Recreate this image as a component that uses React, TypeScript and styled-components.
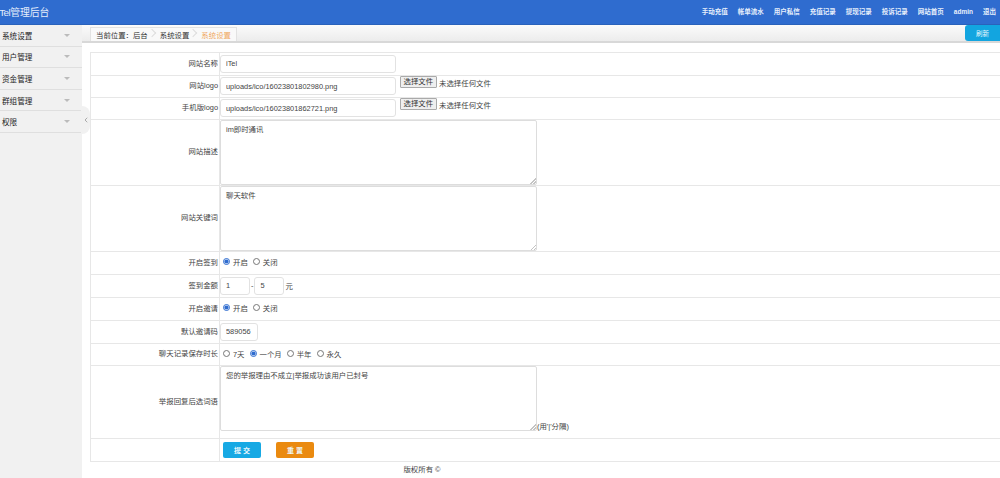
import React from "react";
import styled, { createGlobalStyle } from "styled-components";
import { ChevronLeft } from "lucide-react";

const fontStack = `"Liberation Sans", "Noto Sans CJK SC", sans-serif`;

const GlobalStyle = createGlobalStyle`
  html, body {
    margin: 0;
    padding: 0;
    height: 100%;
    background: #fff;
    overflow: hidden;
  }
  #root {
    height: 100%;
  }
  * {
    box-sizing: border-box;
  }
`;

const navItems = ["手动充值", "帐单流水", "用户私信", "充值记录", "提现记录", "投诉记录", "网站首页", "admin", "退出"];
const sideItems = ["系统设置", "用户管理", "资金管理", "群组管理", "权限"];

export default function App() {
  return (
    <Page>
      <GlobalStyle />
      <Header>
        <Brand><BrandName>iTel</BrandName>管理后台</Brand>
        <TopNav>
          {navItems.map((item) => (
            <TopLink key={item}>{item}</TopLink>
          ))}
        </TopNav>
      </Header>
      <Body>
        <Sidebar>
          {sideItems.map((item) => (
            <SideItem key={item}>
              {item}
              <Caret />
            </SideItem>
          ))}
          <Collapse>
            <ChevronLeft size={8} strokeWidth={3} color="#aaa" />
          </Collapse>
        </Sidebar>
        <Main>
          <CrumbBar>
            <Crumbs>
              <CrumbLabel>当前位置：</CrumbLabel>
              <Crumb>后台</Crumb>
              <Crumb>系统设置</Crumb>
              <Crumb $active>系统设置</Crumb>
            </Crumbs>
            <RefreshButton>刷新</RefreshButton>
          </CrumbBar>
          <Content>
            <FormTable>
              <tbody>
                <Row $height={23}>
                  <LabelCell>网站名称</LabelCell>
                  <FieldCell>
                    <TextInput $width={176} defaultValue="iTel" />
                  </FieldCell>
                </Row>
                <Row $height={22}>
                  <LabelCell>网站logo</LabelCell>
                  <FieldCell>
                    <TextInput $width={176} defaultValue="uploads/ico/16023801802980.png" />
                    <FilePick>
                      <FileButton type="button">选择文件</FileButton>
                      未选择任何文件
                    </FilePick>
                  </FieldCell>
                </Row>
                <Row $height={22}>
                  <LabelCell>手机版logo</LabelCell>
                  <FieldCell>
                    <TextInput $width={176} defaultValue="uploads/ico/16023801862721.png" />
                    <FilePick>
                      <FileButton type="button">选择文件</FileButton>
                      未选择任何文件
                    </FilePick>
                  </FieldCell>
                </Row>
                <Row $height={66}>
                  <LabelCell>网站描述</LabelCell>
                  <AreaCell>
                    <TextArea defaultValue="im即时通讯" />
                  </AreaCell>
                </Row>
                <Row $height={66}>
                  <LabelCell>网站关键词</LabelCell>
                  <AreaCell>
                    <TextArea defaultValue="聊天软件" />
                  </AreaCell>
                </Row>
                <Row $height={23}>
                  <LabelCell>开启签到</LabelCell>
                  <FieldCell>
                    <RadioGroup>
                      <RadioLabel><Radio name="sign" defaultChecked />开启</RadioLabel>
                      <RadioLabel><Radio name="sign" />关闭</RadioLabel>
                    </RadioGroup>
                  </FieldCell>
                </Row>
                <Row $height={23}>
                  <LabelCell>签到金额</LabelCell>
                  <FieldCell>
                    <AmountRow>
                      <TextInput $width={30} defaultValue="1" />
                      -
                      <TextInput $width={30} defaultValue="5" />
                      元
                    </AmountRow>
                  </FieldCell>
                </Row>
                <Row $height={23}>
                  <LabelCell>开启邀请</LabelCell>
                  <FieldCell>
                    <RadioGroup>
                      <RadioLabel><Radio name="invite" defaultChecked />开启</RadioLabel>
                      <RadioLabel><Radio name="invite" />关闭</RadioLabel>
                    </RadioGroup>
                  </FieldCell>
                </Row>
                <Row $height={23}>
                  <LabelCell>默认邀请码</LabelCell>
                  <FieldCell>
                    <TextInput $width={38} defaultValue="589056" />
                  </FieldCell>
                </Row>
                <Row $height={22}>
                  <LabelCell>聊天记录保存时长</LabelCell>
                  <FieldCell>
                    <RadioGroup>
                      <RadioLabel><Radio name="keep" />7天</RadioLabel>
                      <RadioLabel><Radio name="keep" defaultChecked />一个月</RadioLabel>
                      <RadioLabel><Radio name="keep" />半年</RadioLabel>
                      <RadioLabel><Radio name="keep" />永久</RadioLabel>
                    </RadioGroup>
                  </FieldCell>
                </Row>
                <Row $height={73}>
                  <LabelCell>举报回复后选词语</LabelCell>
                  <AreaCell>
                    <TextArea defaultValue="您的举报理由不成立|举报成功该用户已封号" />
                    <Hint>(用'|'分隔)</Hint>
                  </AreaCell>
                </Row>
                <Row $height={23}>
                  <LabelCell />
                  <FieldCell>
                    <ActionRow>
                      <ActionButton type="button" $bg="#17a9e4">提 交</ActionButton>
                      <ActionButton type="button" $bg="#ea8a10">重 置</ActionButton>
                    </ActionRow>
                  </FieldCell>
                </Row>
              </tbody>
            </FormTable>
            <Copyright>版权所有 ©</Copyright>
          </Content>
        </Main>
      </Body>
    </Page>
  );
}

const Page = styled.div`
  display: flex;
  flex-direction: column;
  height: 478px;
  font-family: ${fontStack};
  font-size: 7.4px;
  color: #444;
`;

const Header = styled.header`
  height: 25px;
  flex: none;
  display: flex;
  align-items: center;
  justify-content: space-between;
  background: #2f6ccf;
  border-bottom: 1px solid #2a62bb;
`;

const Brand = styled.div`
  margin-left: -2.5px;
  font-size: 9.8px;
  color: #e6eefb;
`;

const BrandName = styled.span`
  letter-spacing: -0.5px;
`;

const TopNav = styled.nav`
  display: flex;
  align-items: center;
  gap: 10px;
  padding-right: 4px;
`;

const TopLink = styled.a`
  font-size: 6.5px;
  line-height: 10px;
  font-weight: 700;
  color: #e8f0fc;
`;

const Body = styled.div`
  flex: 1;
  display: flex;
  min-height: 0;
`;

const Sidebar = styled.aside`
  position: relative;
  width: 82px;
  flex: none;
  background: #f1f1f1;
`;

const SideItem = styled.div`
  height: 21.6px;
  display: flex;
  align-items: center;
  justify-content: space-between;
  padding: 0 12px 0 2px;
  font-size: 7.6px;
  color: #222;
  border-bottom: 1px solid #dfdfdf;
`;

const Caret = styled.span`
  width: 0;
  height: 0;
  border-left: 3.5px solid transparent;
  border-right: 3.5px solid transparent;
  border-top: 3.5px solid #bbb;
`;

const Collapse = styled.div`
  position: absolute;
  top: 81px;
  right: -8px;
  width: 9px;
  height: 28px;
  display: flex;
  align-items: center;
  justify-content: center;
  background: #f1f1f1;
  border-radius: 0 8px 8px 0;
`;

const Main = styled.main`
  flex: 1;
  min-width: 0;
  display: flex;
  flex-direction: column;
`;

const CrumbBar = styled.div`
  height: 18px;
  flex: none;
  display: flex;
  justify-content: space-between;
  padding-left: 8px;
  background: linear-gradient(#fbfbfb, #ececec);
  border-bottom: 2px solid #d8d8d8;
`;

const Crumbs = styled.div`
  display: flex;
  align-items: center;
  height: 14px;
  margin-top: 2px;
  padding: 0 5px;
  gap: 4px;
  background: #f9f9f9;
  border: 1px solid #e2e2e2;
  border-bottom: none;
`;

const CrumbLabel = styled.span`
  font-size: 7.4px;
  color: #333;
  margin-right: -4px;
`;

const Crumb = styled.span<{ $active?: boolean }>`
  position: relative;
  font-size: 7.4px;
  padding-right: 8px;
  color: ${(p) => (p.$active ? "#f0a860" : "#333")};

  &:not(:last-child)::after {
    content: "";
    position: absolute;
    top: 1px;
    right: 1px;
    width: 5px;
    height: 5px;
    border-top: 1px solid #ddd;
    border-right: 1px solid #ddd;
    transform: rotate(45deg);
  }

  &:last-child {
    padding-right: 0;
  }
`;

const RefreshButton = styled.button`
  width: 35px;
  height: 16px;
  border: none;
  padding: 0;
  border-radius: 3px 0 0 3px;
  background: #12a5e0;
  color: #e8f7fd;
  font-family: ${fontStack};
  font-size: 6.5px;
`;

const Content = styled.div`
  flex: 1;
  padding: 9px 0 0 8px;
  overflow: hidden;
`;

const FormTable = styled.table`
  width: 100%;
  border-collapse: collapse;
  table-layout: fixed;
  border-top: 1px solid #e7e7e7;
`;

const Row = styled.tr<{ $height: number }>`
  height: ${(p) => p.$height}px;
  border-bottom: 1px solid #e7e7e7;
`;

const LabelCell = styled.td`
  width: 129px;
  padding: 0 1px 4px 0;
  text-align: right;
  vertical-align: middle;
  font-size: 7.4px;
  color: #444;
  border-right: 1px solid #e7e7e7;
  border-left: 1px solid #e7e7e7;
`;

const FieldCell = styled.td`
  padding: 0 0 1px 0;
  vertical-align: middle;
  font-size: 7.4px;
  color: #444;
`;

const AreaCell = styled(FieldCell)`
  padding: 0;
  vertical-align: top;
  line-height: 0;
`;

const TextInput = styled.input.attrs({ type: "text" })<{ $width: number }>`
  width: ${(p) => p.$width}px;
  height: 18px;
  padding: 0 5px;
  vertical-align: middle;
  border: 1px solid #e2e2e2;
  border-radius: 3px;
  background: #fff;
  outline: none;
  font-family: ${fontStack};
  font-size: 7.4px;
  color: #444;
`;

const FilePick = styled.span`
  display: inline-flex;
  align-items: center;
  gap: 2.5px;
  margin-left: 4px;
  vertical-align: top;
  font-size: 7.4px;
  color: #444;
`;

const FileButton = styled.button`
  height: 12px;
  margin-top: -1px;
  padding: 0 2.5px;
  border: 1px solid #aaa;
  border-radius: 1px;
  background: #efefef;
  font-family: ${fontStack};
  font-size: 7.4px;
  line-height: 1;
  color: #333;
`;

const TextArea = styled.textarea`
  display: inline-block;
  width: 317px;
  height: 65px;
  padding: 3px 5px;
  vertical-align: bottom;
  border: 1px solid #ddd;
  border-radius: 2px;
  outline: none;
  font-family: ${fontStack};
  font-size: 7.4px;
  line-height: 11px;
  color: #444;

  &::-webkit-resizer {
    background: linear-gradient(
        135deg,
        transparent 50%,
        #c4c4c4 50%,
        #c4c4c4 60%,
        transparent 60%,
        transparent 75%,
        #c4c4c4 75%,
        #c4c4c4 85%,
        transparent 85%
      )
      bottom right / 6px 6px no-repeat;
  }
`;

const Hint = styled.span`
  font-size: 7.4px;
  line-height: 9px;
  vertical-align: -2px;
  color: #444;
`;

const RadioGroup = styled.div`
  display: flex;
  align-items: center;
  gap: 5px;
  padding: 0 0 2px 3px;
`;

const RadioLabel = styled.label`
  display: inline-flex;
  align-items: center;
  gap: 3px;
`;

const Radio = styled.input.attrs({ type: "radio" })`
  width: 7px;
  height: 7px;
  margin: 0;
  accent-color: #2f6ccf;
`;

const AmountRow = styled.div`
  display: flex;
  align-items: center;
  gap: 1px;
`;

const ActionRow = styled.div`
  display: flex;
  gap: 15px;
  padding-left: 3px;
`;

const ActionButton = styled.button<{ $bg: string }>`
  width: 38px;
  height: 16px;
  padding: 0;
  border: none;
  border-radius: 2px;
  background: ${(p) => p.$bg};
  color: #eef8fd;
  font-family: ${fontStack};
  font-size: 7px;
  font-weight: 700;
`;

const Copyright = styled.div`
  margin-top: 1px;
  padding-right: 246px;
  text-align: center;
  font-size: 7.4px;
  color: #444;
`;
